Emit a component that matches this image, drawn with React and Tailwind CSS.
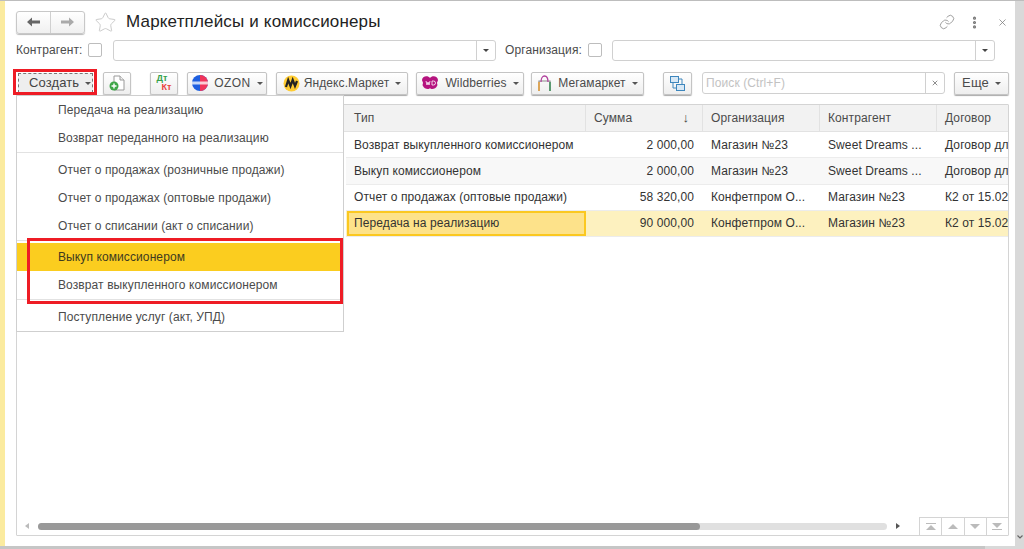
import { Star, Link, MoreVertical, X } from "lucide-react";

const menuGroups = [
  { pad: "", items: ["Передача на реализацию", "Возврат переданного на реализацию"] },
  { pad: "pt-[3px]", items: ["Отчет о продажах (розничные продажи)", "Отчет о продажах (оптовые продажи)", "Отчет о списании (акт о списании)"] },
  { pad: "pt-[2px]", items: ["Выкуп комиссионером", "Возврат выкупленного комиссионером"] },
  { pad: "pt-[3px]", items: ["Поступление услуг (акт, УПД)"] },
];

const rows = [
  ["Возврат выкупленного комиссионером", "2 000,00", "Магазин №23", "Sweet Dreams ...", "Договор дл"],
  ["Выкуп комиссионером", "2 000,00", "Магазин №23", "Sweet Dreams ...", "Договор дл"],
  ["Отчет о продажах (оптовые продажи)", "58 320,00", "Конфетпром О...", "Магазин №23", "К2 от 15.02"],
  ["Передача на реализацию", "90 000,00", "Конфетпром О...", "Магазин №23", "К2 от 15.02"],
];

function Caret() {
  return <span className="ml-[6px] inline-block border-x-[3px] border-t-[3px] border-x-transparent border-t-[#555]" />;
}

function Btn({ children, className = "" }) {
  return (
    <div className={"flex h-[23px] items-center justify-center rounded-[2px] border border-[#c4c4c4] bg-gradient-to-b from-white to-[#eeeeee] shadow-[0_1px_1px_#aaa] " + className}>
      {children}
    </div>
  );
}

function Check() {
  return <div className="h-[14px] w-[14px] rounded-[2px] border border-[#bdbdbd] bg-white" />;
}

function Field({ className = "" }) {
  return (
    <div className={"flex h-[21px] rounded-[3px] border border-[#d0d0d0] bg-white " + className}>
      <div className="flex-1" />
      <div className="flex w-[19px] items-center justify-center border-l border-[#d0d0d0]">
        <span className="border-x-[3px] border-t-[3px] border-x-transparent border-t-[#444]" />
      </div>
    </div>
  );
}

export default function App() {
  return (
    <div className="relative flex h-[549px] w-[1024px] flex-col overflow-hidden bg-[#d9d9d9] font-['Liberation_Sans',sans-serif] text-[12px] tracking-[0.1px] text-[#4b4b4b]">
      <div className="h-[1px] bg-[#bdbdbd]" />
      <div className="flex h-[545px]">
        <div className="w-[5px] bg-[#fbeb9f]" />
        <div className="flex w-[1010px] flex-col bg-white pl-[11px] pr-[6px] pt-[8px]">
          {/* title */}
          <div className="flex h-[26px] items-center">
            <div className="flex h-[23px] w-[69px] rounded-[3px] border border-[#c8c8c8] bg-gradient-to-b from-white to-[#f0f0f0] shadow-[0_1px_1px_#bbb]">
              <div className="flex w-[34px] items-center justify-center border-r border-[#d0d0d0]">
                <svg width="13" height="10" viewBox="0 0 13 10">
                  <path d="M0 5l5-4.500v3h8v3H5v3z" fill="#666" />
                </svg>
              </div>
              <div className="flex flex-1 items-center justify-center">
                <svg width="13" height="10" viewBox="0 0 13 10">
                  <path d="M13 5L8 .5v3H0v3h8v3z" fill="#aaa" />
                </svg>
              </div>
            </div>
            <Star size={23} strokeWidth={1} className="ml-[9px] text-[#c9c9c9]" />
            <div className="ml-[9px] text-[17px] tracking-[0.17px] text-[#222]">Маркетплейсы и комиссионеры</div>
            <div className="flex-1" />
            <Link size={16} strokeWidth={1.2} className="mr-[12px] text-[#888]" />
            <MoreVertical size={15} strokeWidth={3} className="mr-[15px] text-[#777]" />
            <X size={11} strokeWidth={1.6} className="mr-[1px] text-[#777]" />
          </div>

          {/* filters */}
          <div className="mt-[4px] flex h-[22px] items-center">
            <span className="w-[72px]">Контрагент:</span>
            <Check />
            <Field className="ml-[11px] w-[383px]" />
            <span className="ml-[9px] w-[83px]">Организация:</span>
            <Check />
            <Field className="ml-[10px] w-[383px]" />
          </div>

          {/* toolbar */}
          <div className="mt-[10px] flex h-[24px] items-center">
            <div className="ml-[2px] flex h-[20px] w-[75px] items-center border border-dashed border-[#777] bg-[#eeeeee] pl-[10px] text-[13px] text-[#444]">
              Создать<Caret />
            </div>
            <Btn className="ml-[10px] w-[28px]">
              <svg width="18" height="18" viewBox="0 0 18 18">
                <path d="M6 2h6l4 4v10H6z" fill="#fff" stroke="#9a9a9a" />
                <path d="M12 2v4h4" fill="#eee" stroke="#9a9a9a" />
                <circle cx="6" cy="12" r="4.500" fill="#3fa648" />
                <path d="M3.500 12h5M6 9.500v5" stroke="#fff" strokeWidth="1.4" />
              </svg>
            </Btn>
            <Btn className="ml-[19px] w-[28px]">
              <div className="flex flex-col text-[9px] font-bold leading-[9px]">
                <span className="text-[#35a24a]">Дт</span>
                <span className="ml-[5px] text-[#e8433c]">Кт</span>
              </div>
            </Btn>
            <Btn className="ml-[9px] w-[80px]">
              <svg width="18" height="18" viewBox="0 0 18 18">
                <circle cx="9" cy="9" r="8" fill="#1e5fe0" />
                <path d="M9 1a8 8 0 0 1 0 16z" fill="#f0345a" />
                <rect x="1" y="7.500" width="16" height="3" fill="#fff" opacity="0.75" />
              </svg>
              <span className="ml-[5px] tracking-[0.4px]">OZON</span>
              <Caret />
            </Btn>
            <Btn className="ml-[9px] w-[132px]">
              <svg width="17" height="17" viewBox="0 0 17 17">
                <circle cx="8.500" cy="8.500" r="8" fill="#fc3" />
                <path d="M3 12l2.200-7 2.300 6 2.200-6 2.300 6L14 6" fill="none" stroke="#222" strokeWidth="2.2" />
              </svg>
              <span className="ml-[4px]">Яндекс.Маркет</span>
              <Caret />
            </Btn>
            <Btn className="ml-[8px] w-[108px]">
              <svg width="18" height="14" viewBox="0 0 18 14">
                <path d="M9 2c2-3 8-2 8 2 0 1-1 2-1 3s1 2 0 3c-1 3-6 4-7 2-1 2-6 1-7-2-1-1 0-2 0-3S1 5 1 4c0-4 6-5 8-2z" fill="#b5147f" />
                <path d="M5 5l1 4 1-3 1 3 1-4M11 5v4h1.500a1 1 0 0 0 0-4z" fill="none" stroke="#fff" strokeWidth="0.8" />
              </svg>
              <span className="ml-[6px]">Wildberries</span>
              <Caret />
            </Btn>
            <Btn className="ml-[7px] w-[113px]">
              <svg width="15" height="17" viewBox="0 0 15 17">
                <path d="M2 16V6h11v10" fill="none" stroke="#8c8c8c" strokeWidth="1.2" />
                <path d="M4 7c0-8 7-8 7 0" fill="none" stroke="#b0409c" strokeWidth="1.3" />
                <path d="M2 16V7" stroke="#e8a13a" strokeWidth="1.5" />
                <path d="M13 16V7" stroke="#3c8f5a" strokeWidth="1.5" />
              </svg>
              <span className="ml-[6px]">Мегамаркет</span>
              <Caret />
            </Btn>
            <Btn className="ml-[19px] w-[29px]">
              <svg width="17" height="17" viewBox="0 0 17 17">
                <rect x="1.500" y="1.500" width="8" height="6" fill="#d8e8f5" stroke="#3d86bd" />
                <rect x="7.500" y="9.500" width="8" height="6" fill="#d8e8f5" stroke="#3d86bd" />
                <path d="M4 8v5h3M13 9V4h-3" fill="none" stroke="#3d86bd" />
              </svg>
            </Btn>
            <div className="ml-[10px] flex h-[22px] w-[243px] rounded-[3px] border border-[#d0d0d0]">
              <span className="flex-1 self-center pl-[3px] text-[#c2c2c2]">Поиск (Ctrl+F)</span>
              <div className="flex w-[19px] items-center justify-center border-l border-[#d0d0d0]">
                <X size={8} strokeWidth={2.2} className="text-[#666]" />
              </div>
            </div>
            <Btn className="ml-[9px] w-[55px] text-[13px]">
              Еще<Caret />
            </Btn>
          </div>

          {/* table */}
          <div className="mt-[9px] flex h-[432px] w-[993px] flex-col rounded-[1px] border border-[#d4d4d4]">
            <div className="flex h-[27px] border-b border-[#e2e2e2] bg-[#f2f2f2] pl-[329px]">
              <div className="flex w-[240px] items-center border-r border-[#e2e2e2] pl-[8px]">Тип</div>
              <div className="flex w-[117px] items-center justify-between border-r border-[#e2e2e2] pl-[8px] pr-[13px]">
                <span>Сумма</span>
                <span className="text-[13px] text-[#444]">↓</span>
              </div>
              <div className="flex w-[117px] items-center border-r border-[#e2e2e2] pl-[8px]">Организация</div>
              <div className="flex w-[117px] items-center border-r border-[#e2e2e2] pl-[8px]">Контрагент</div>
              <div className="flex flex-1 items-center pl-[8px]">Договор</div>
            </div>
            <div className="flex-1 pl-[329px] text-[#333]">
              {rows.map((r, i) => {
                const selected = i === 3;
                const bg = selected ? "bg-[#fdf1bf]" : i === 1 ? "bg-[#f8f8f8]" : "bg-white";
                return (
                  <div key={r[0]} className={"flex h-[26.25px] items-center border-b border-[#ececec] " + bg}>
                    <div className={selected ? "ml-[1px] flex h-full w-[239px] items-center border-2 border-[#fbc820] bg-[#fde28a] pl-[5px]" : "w-[240px] pl-[8px]"}>{r[0]}</div>
                    <div className="w-[117px] pr-[9px] text-right">{r[1]}</div>
                    <div className="w-[117px] pl-[8px]">{r[2]}</div>
                    <div className="w-[117px] pl-[8px]">{r[3]}</div>
                    <div className="flex-1 overflow-hidden whitespace-nowrap pl-[8px]">{r[4]}</div>
                  </div>
                );
              })}
            </div>
            <div className="flex h-[18px] items-center">
              <span className="ml-[8px] border-y-[3px] border-r-[4px] border-y-transparent border-r-[#bbb]" />
              <div className="ml-[9px] flex h-[7px] w-[849px] rounded-full bg-[#e0e0e0]">
                <div className="h-full w-[662px] rounded-full bg-[#999]" />
              </div>
              <span className="ml-[9px] border-y-[3px] border-l-[4px] border-y-transparent border-l-[#555]" />
              <div className="ml-[19px] flex h-[18px] flex-1 border-l border-t border-[#d4d4d4]">
                {["t", "u", "d", "b"].map((k) => (
                  <div key={k} className="flex flex-1 flex-col items-center justify-center gap-[1px] border-r border-[#d4d4d4] last:border-r-0">
                    {k === "t" && <span className="h-[1px] w-[10px] bg-[#bbb]" />}
                    {(k === "t" || k === "u") && <span className="border-x-[5px] border-b-[5px] border-x-transparent border-b-[#bbb]" />}
                    {(k === "d" || k === "b") && <span className="border-x-[5px] border-t-[5px] border-x-transparent border-t-[#bbb]" />}
                    {k === "b" && <span className="h-[1px] w-[10px] bg-[#bbb]" />}
                  </div>
                ))}
              </div>
            </div>
          </div>
        </div>
        <div className="flex flex-1 items-start justify-center pt-[534px]">
          <svg width="6" height="4" viewBox="0 0 6 4">
            <path d="M.5.500L3 3 5.500.500" fill="none" stroke="#666" strokeWidth="1.2" />
          </svg>
        </div>
      </div>
      <div className="h-[3px] w-[985px] bg-[#c6c6c6]" />

      {/* dropdown menu */}
      <div className="absolute left-[16px] top-[95px] w-[328px] border border-[#cfcfcf] bg-white text-[#4b4b4b]">
        {menuGroups.map((group, g) => (
          <div key={g} className={(g < 3 ? "border-b border-[#e2e2e2] " : "") + group.pad}>
            {group.items.map((item) => (
              <div key={item} className={"flex h-[28px] items-center pl-[41px] " + (item === "Выкуп комиссионером" ? "bg-[#fbcd1f] text-[#3e3a20]" : "")}>
                {item}
              </div>
            ))}
          </div>
        ))}
      </div>

      {/* red annotations */}
      <div className="pointer-events-none absolute left-[13px] top-[69px] h-[26px] w-[84px] border-[3px] border-[#ee1c25]" />
      <div className="pointer-events-none absolute left-[27px] top-[238px] h-[66px] w-[316px] border-[3px] border-[#ee1c25]" />
    </div>
  );
}
